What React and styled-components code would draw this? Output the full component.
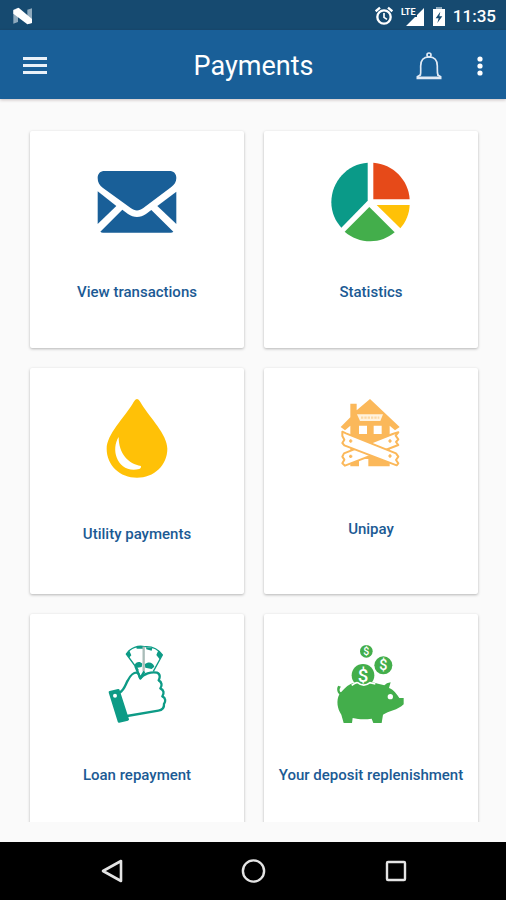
import React from "react";
import styled, { createGlobalStyle } from "styled-components";

const GlobalStyle = createGlobalStyle`
    * {
        box-sizing: border-box;
    }

    body {
        margin: 0;
        font-family: Roboto, "Liberation Sans", sans-serif;
        background: #fafafa;
    }
`

const Screen = styled.div`
    height: 100vh;
    display: flex;
    flex-direction: column;
    background: #fafafa;
`

const StatusBar = styled.div`
    height: 30px;
    flex-shrink: 0;
    display: flex;
    align-items: center;
    justify-content: space-between;
    padding: 2px 10px 0 12px;
    background: #164a70;
    color: #fff;
`

const StatusIcons = styled.div`
    display: flex;
    align-items: center;
    gap: 8px;
`

const Clock = styled.span`
    font-size: 17px;
    line-height: 20px;
    font-weight: 500;
`

const AppBar = styled.header`
    position: relative;
    height: 69px;
    flex-shrink: 0;
    display: grid;
    grid-template-columns: 1fr auto 1fr;
    align-items: center;
    padding: 2px 15px 0 16px;
    background: #195f98;
    color: #fff;
    box-shadow: 0 1px 3px rgba(60, 20, 20, 0.25);
`

const Title = styled.h1`
    margin: 0;
    font-size: 27px;
    line-height: 32px;
    font-weight: 400;
`

const Actions = styled.div`
    display: flex;
    justify-content: flex-end;
    gap: 20px;
`

const IconButton = styled.button`
    width: ${props => props.$width}px;
    height: 40px;
    display: flex;
    align-items: center;
    justify-content: center;
    padding: 0;
    border: none;
    background: none;
    color: inherit;
    cursor: pointer;
`

const Content = styled.main`
    flex: 1;
    min-height: 0;
    margin-bottom: 20px;
    padding: 32px 28px 0 30px;
    overflow: hidden;
`

const CardGrid = styled.div`
    display: grid;
    grid-template-columns: 1fr 1fr;
    grid-template-rows: 217px;
    grid-auto-rows: 226px;
    gap: 20px;
`

const Card = styled.button`
    display: flex;
    flex-direction: column;
    align-items: center;
    justify-content: flex-start;
    gap: ${props => props.$gap || 40}px;
    padding: 31px 0 0;
    border: none;
    border-radius: 2px;
    background: #fff;
    color: #1b5a94;
    font-family: inherit;
    box-shadow: 0 1px 3px rgba(0, 0, 0, 0.28);
    cursor: pointer;
`

const CardLabel = styled.span`
    font-size: 15px;
    line-height: 20px;
    font-weight: 500;
    white-space: nowrap;
`

const NavBar = styled.nav`
    height: 58px;
    flex-shrink: 0;
    display: flex;
    align-items: center;
    justify-content: center;
    gap: 102px;
    background: #000;
    color: #e4e4e4;
`

const AndroidLogo = () => (
    <svg width="22" height="18" viewBox="0 0 66 54">
        <path d="M4 8 18 2V45L4 50Z" fill="#8faabd" />
        <path d="M46 8 60 4V48L46 52Z" fill="#8faabd" />
        <path d="M4 10 20 2 60 36V48L46 52 4 20Z" fill="#fff" />
    </svg>
)

const AlarmIcon = () => (
    <svg width="18" height="20" viewBox="0 0 54 60" fill="none" stroke="#fff">
        <circle cx="27" cy="33" r="20" strokeWidth="7" />
        <path d="M2 16 15 5M52 16 39 5" strokeWidth="7" />
        <path d="M27 21V34L36 40" strokeWidth="5" />
    </svg>
)

const SignalIcon = () => (
    <svg width="24" height="20" viewBox="0 0 24 20" fill="#fff">
        <text x="0" y="9" fontSize="9" fontWeight="700" fontFamily="'Liberation Sans Narrow', Roboto, sans-serif">LTE</text>
        <path d="M23 2V20H5L14 11H16V9Z" />
    </svg>
)

const BatteryIcon = () => (
    <svg width="12" height="19" viewBox="0 0 36 57">
        <path d="M10 0H26V6H36V57H0V6H10Z" fill="#fff" />
        <path d="M10 0H26V6H10Z" fill="#8faabd" />
        <path d="M22 14 8 34H17L13 48 28 28H19Z" fill="#164a70" />
    </svg>
)

const MenuIcon = () => (
    <svg width="24" height="18" viewBox="0 0 24 18" fill="#e9f1f9">
        <path d="M0 0H24V3H0ZM0 7H24V10H0ZM0 14H24V17H0Z" />
    </svg>
)

const BellIcon = () => (
    <svg width="26" height="28" viewBox="0 0 78 84" fill="none" stroke="#e1eaf5" strokeWidth="5">
        <circle cx="39" cy="9" r="6" />
        <path d="M13 70C15 62 14 52 14 42C14 24 24 15 39 15S64 24 64 42C64 52 63 62 66 70" />
        <path d="M14 68 4 74V79H74V74L64 68" />
        <path d="M4 77H74" strokeWidth="7" />
    </svg>
)

const DotsIcon = () => (
    <svg width="6" height="20" viewBox="0 0 6 20" fill="#fff">
        <circle cx="3" cy="3" r="2.6" />
        <circle cx="3" cy="10" r="2.6" />
        <circle cx="3" cy="17" r="2.6" />
    </svg>
)

const EnvelopeIcon = () => (
    <svg width="80" height="80" viewBox="51 36 240 240" fill="#195f98">
        <path d="M53 84C53 71 61 63 74 63H268C281 63 289 71 289 84C289 96 283 104 273 112L190 174C177 184 165 184 152 174L68 113C58 105 53 97 53 84Z" />
        <path d="M53 124 109 168 53 222Z" />
        <path d="M289 125V222L232 168Z" />
        <path d="M127 179 144 192C161 204 181 204 198 192L214 180 280 245Q277 248 272 248H69Q64 248 61 245Z" />
    </svg>
)

const PieIcon = () => (
    <svg width="80" height="80" viewBox="63 36 240 240">
        <path d="M173 38V152L94 233C76 214 64 187 64 157C64 94 112 42 173 38Z" fill="#0a9a88" />
        <path d="M190 38C249 42 296 90 299 148H190Z" fill="#e64a19" />
        <path d="M200 165H299C298 191 288 216 271 235Z" fill="#ffc107" />
        <path d="M178 171 254 247C234 264 208 274 181 274C152 274 125 263 104 245Z" fill="#43ae4b" />
    </svg>
)

const DropIcon = () => (
    <svg width="80" height="80" viewBox="21 27 240 240">
        <path d="M141 27C147 27 150 35 155 43C179 82 232 134 232 176C232 226 192 263 141 263S50 226 50 176C50 134 103 82 127 43C132 35 135 27 141 27Z" fill="#ffc107" />
        <path d="M86 141C60 181 84 252 148 237Q154 235 153 228C115 222 86 191 86 141Z" fill="#fff" />
    </svg>
)

const HouseIcon = () => (
    <svg width="80" height="80" viewBox="18 42 240 240">
        <path d="M76 97V56H95V76L135 42 224 126 210 136 194 122V244H76V122L60 136 47 126Z" fill="#fbb85a" />
        <path d="M96 88H174L166 108H105Z" fill="#fff3df" />
        <path d="M108 98H163" stroke="#fbb85a" strokeWidth="7" strokeDasharray="7 3" opacity="0.45" />
        <path d="M102 122H126V147H102ZM146 122H170V147H146ZM102 222H130V246H102Z" fill="#fff" />
        <g fill="#fff" stroke="#fbb85a" strokeWidth="6" strokeLinejoin="round">
            <path d="M220 142 212 152 220 163 213 171 220 180 60 242 52 235 58 224 52 215 57 205 203 147Z" />
            <path d="M52 140 63 145 213 205 220 215 213 225 220 235 215 241 58 181 52 174 58 164 52 153Z" />
        </g>
        <path d="M72 168H82M77 163V173M190 168H200M195 163V173M72 214H82M77 209V219M190 213H200M195 208V218" stroke="#fbb85a" strokeWidth="5" />
    </svg>
)

const HandIcon = () => (
    <svg width="80" height="80" viewBox="21 45 240 240" fill="none" stroke="#0d9b86" strokeWidth="6" strokeLinejoin="round">
        <path d="M145 121 109 72C122 52 145 46 163 50C186 48 204 56 217 75L190 124" strokeWidth="4" />
        <path d="M109 72 117 60 124 76 117 83ZM217 75 205 61 199 75 209 88ZM139 50H160V56H140ZM168 52 187 54 185 62 169 58Z" fill="#0d9b86" stroke="none" />
        <path d="M134 106C137 95 150 93 157 101L155 111 139 114ZM164 103C176 92 190 98 193 110L185 117 166 113Z" fill="#0d9b86" stroke="none" />
        <path d="M161 50V124" stroke="#a9bcb8" strokeWidth="7" />
        <path d="M136 108 151 145 163 124" strokeWidth="7" />
        <path d="M89 188C104 179 106 164 113 152C121 136 133 125 143 129C149 133 147 140 151 145C160 132 184 124 201 128C212 132 210 144 206 151C216 156 217 167 211 175C222 180 223 190 217 199C228 204 227 215 222 222C223 235 217 240 205 242L111 258" strokeWidth="7" />
        <path d="M60 187 85 181 113 268 87 274Z" fill="#0d9b86" strokeWidth="8" />
        <circle cx="75" cy="197" r="6" fill="#fff" stroke="none" />
    </svg>
)

const coins = [
    { x: 124, y: 64, r: 19, size: 32 },
    { x: 175, y: 106, r: 27, size: 43 },
    { x: 114, y: 136, r: 34, size: 56 },
]

const PiggyIcon = () => (
    <svg width="80" height="80" viewBox="18 45 240 240" fill="#43ae4b">
        {coins.map(({ x, y, r, size }) => (
            <g key={x}>
                <circle cx={x} cy={y} r={r} />
                <text x={x} y={y + size * 0.36} fontSize={size} fontWeight="500" textAnchor="middle" fill="#fff">$</text>
            </g>
        ))}
        <path d="M58 176C69 164 85 158 96 157Q116 172 137 157C153 159 166 163 178 166Q184 159 197 157L192 174C207 179 215 193 223 204L236 204V223C219 240 190 244 174 254L170 279H145L140 266C121 269 103 269 83 264L81 279H56L49 254C37 237 33 212 43 193C35 185 35 172 40 167L48 170C42 177 43 184 48 187Z" />
        <path d="M80 166Q92 156 98 158Q116 173 135 158L151 162" fill="none" stroke="#fff" strokeWidth="5" />
        <circle cx="196" cy="200" r="8" fill="#fff" />
    </svg>
)

const BackIcon = () => (
    <svg width="24" height="26" viewBox="0 0 24 26" fill="none" stroke="currentColor" strokeWidth="2.6" strokeLinejoin="round">
        <path d="M22 3V23L4 13Z" />
    </svg>
)

const HomeIcon = () => (
    <svg width="26" height="26" viewBox="0 0 26 26" fill="none" stroke="currentColor" strokeWidth="2.4">
        <circle cx="13.5" cy="13" r="10.6" />
    </svg>
)

const RecentIcon = () => (
    <svg width="24" height="24" viewBox="0 0 24 24" fill="none" stroke="currentColor" strokeWidth="2.4">
        <rect x="4" y="3" width="18" height="18" rx="1" />
    </svg>
)

const services = [
    { label: "View transactions", Icon: EnvelopeIcon },
    { label: "Statistics", Icon: PieIcon },
    { label: "Utility payments", Icon: DropIcon, gap: 45 },
    { label: "Unipay", Icon: HouseIcon },
    { label: "Loan repayment", Icon: HandIcon },
    { label: "Your deposit replenishment", Icon: PiggyIcon },
]

const App = () => {
    return (
        <Screen>
            <GlobalStyle />
            <StatusBar>
                <AndroidLogo />
                <StatusIcons>
                    <AlarmIcon />
                    <SignalIcon />
                    <BatteryIcon />
                    <Clock>11:35</Clock>
                </StatusIcons>
            </StatusBar>
            <AppBar>
                <IconButton $width={38} aria-label="Menu"><MenuIcon /></IconButton>
                <Title>Payments</Title>
                <Actions>
                    <IconButton $width={40} aria-label="Notifications"><BellIcon /></IconButton>
                    <IconButton $width={22} aria-label="More"><DotsIcon /></IconButton>
                </Actions>
            </AppBar>
            <Content>
                <CardGrid>
                    {services.map(({ label, Icon, gap }) => (
                        <Card key={label} $gap={gap}>
                            <Icon />
                            <CardLabel>{label}</CardLabel>
                        </Card>
                    ))}
                </CardGrid>
            </Content>
            <NavBar>
                <IconButton $width={40} aria-label="Back"><BackIcon /></IconButton>
                <IconButton $width={40} aria-label="Home"><HomeIcon /></IconButton>
                <IconButton $width={40} aria-label="Recent apps"><RecentIcon /></IconButton>
            </NavBar>
        </Screen>
    )
}

export default App
